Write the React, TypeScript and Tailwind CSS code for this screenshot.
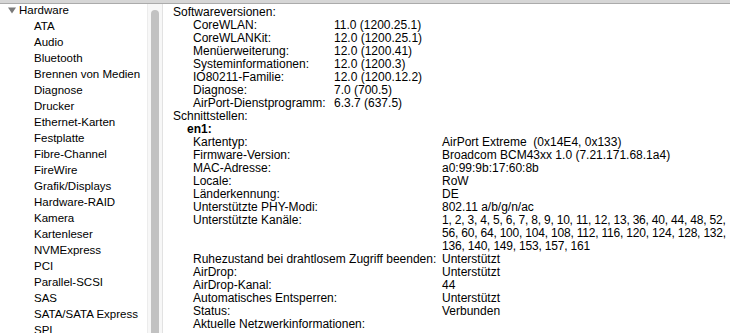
import React from 'react';

const sidebarItems = [
  'ATA', 'Audio', 'Bluetooth', 'Brennen von Medien', 'Diagnose', 'Drucker',
  'Ethernet-Karten', 'Festplatte', 'Fibre-Channel', 'FireWire', 'Grafik/Displays',
  'Hardware-RAID', 'Kamera', 'Kartenleser', 'NVMExpress', 'PCI', 'Parallel-SCSI',
  'SAS', 'SATA/SATA Express', 'SPI',
];

const software: [string, string][] = [
  ['CoreWLAN:', '11.0 (1200.25.1)'],
  ['CoreWLANKit:', '12.0 (1200.25.1)'],
  ['Menüerweiterung:', '12.0 (1200.41)'],
  ['Systeminformationen:', '12.0 (1200.3)'],
  ['IO80211-Familie:', '12.0 (1200.12.2)'],
  ['Diagnose:', '7.0 (700.5)'],
  ['AirPort-Dienstprogramm:', '6.3.7 (637.5)'],
];

const iface: [string, React.ReactNode][] = [
  ['Kartentyp:', 'AirPort Extreme  (0x14E4, 0x133)'],
  ['Firmware-Version:', 'Broadcom BCM43xx 1.0 (7.21.171.68.1a4)'],
  ['MAC-Adresse:', 'a0:99:9b:17:60:8b'],
  ['Locale:', 'RoW'],
  ['Länderkennung:', 'DE'],
  ['Unterstützte PHY-Modi:', '802.11 a/b/g/n/ac'],
  [
    'Unterstützte Kanäle:',
    <span className="tracking-[-0.2px]">
      1, 2, 3, 4, 5, 6, 7, 8, 9, 10, 11, 12, 13, 36, 40, 44, 48, 52,
      <br />
      56, 60, 64, 100, 104, 108, 112, 116, 120, 124, 128, 132,
      <br />
      136, 140, 149, 153, 157, 161
    </span>,
  ],
  ['Ruhezustand bei drahtlosem Zugriff beenden:', 'Unterstützt'],
  ['AirDrop:', 'Unterstützt'],
  ['AirDrop-Kanal:', '44'],
  ['Automatisches Entsperren:', 'Unterstützt'],
  ['Status:', 'Verbunden'],
  ['Aktuelle Netzwerkinformationen:', ''],
];

export default function App() {
  return (
    <div className="w-[730px] h-[333px] overflow-hidden flex flex-col bg-white text-black font-['Liberation_Sans',Arial,sans-serif]">
      {/* top edge of the window toolbar */}
      <div className="h-[4px] shrink-0 bg-[#d6d6d6] border-b border-[#ababab]" />

      <div className="flex flex-1 min-h-0">
        {/* Sidebar */}
        <aside className="w-[147px] shrink-0 overflow-hidden text-[11.5px] leading-[16px]">
          <div className="-mt-[2px]">
            <div className="flex items-center h-[16px] pl-[8px]">
              <svg width="8" height="7" viewBox="0 0 8 7" className="mr-[3px]">
                <path d="M0 0.5 L8 0.5 L4 6.5 Z" fill="#7a7a7a" />
              </svg>
              <span>Hardware</span>
            </div>
            {sidebarItems.map((item) => (
              <div key={item} className="h-[16px] pl-[34px] whitespace-nowrap">
                {item}
              </div>
            ))}
          </div>
        </aside>

        {/* Scrollbar */}
        <div className="w-[16px] shrink-0 bg-[#f7f7f7] border-l border-[#ececec] border-r border-r-[#e2e2e2] flex justify-center pt-[6px]">
          <div className="w-[8px] h-full rounded-t-full bg-[#c2c2c2]" />
        </div>

        {/* Content */}
        <main className="flex-1 min-w-0 overflow-hidden pl-[10px] pt-[2px] text-[12px] leading-[13px] whitespace-nowrap">
          <div>Softwareversionen:</div>
          <div className="grid grid-cols-[141px_1fr] pl-[20px]">
            {software.map(([k, v]) => (
              <React.Fragment key={k}>
                <div>{k}</div>
                <div>{v}</div>
              </React.Fragment>
            ))}
          </div>
          <div>Schnittstellen:</div>
          <div className="pl-[14px] font-bold">en1:</div>
          <div className="grid grid-cols-[249px_1fr] pl-[20px]">
            {iface.map(([k, v]) => (
              <React.Fragment key={k}>
                <div>{k}</div>
                <div className="whitespace-pre">{v}</div>
              </React.Fragment>
            ))}
          </div>
        </main>
      </div>
    </div>
  );
}
